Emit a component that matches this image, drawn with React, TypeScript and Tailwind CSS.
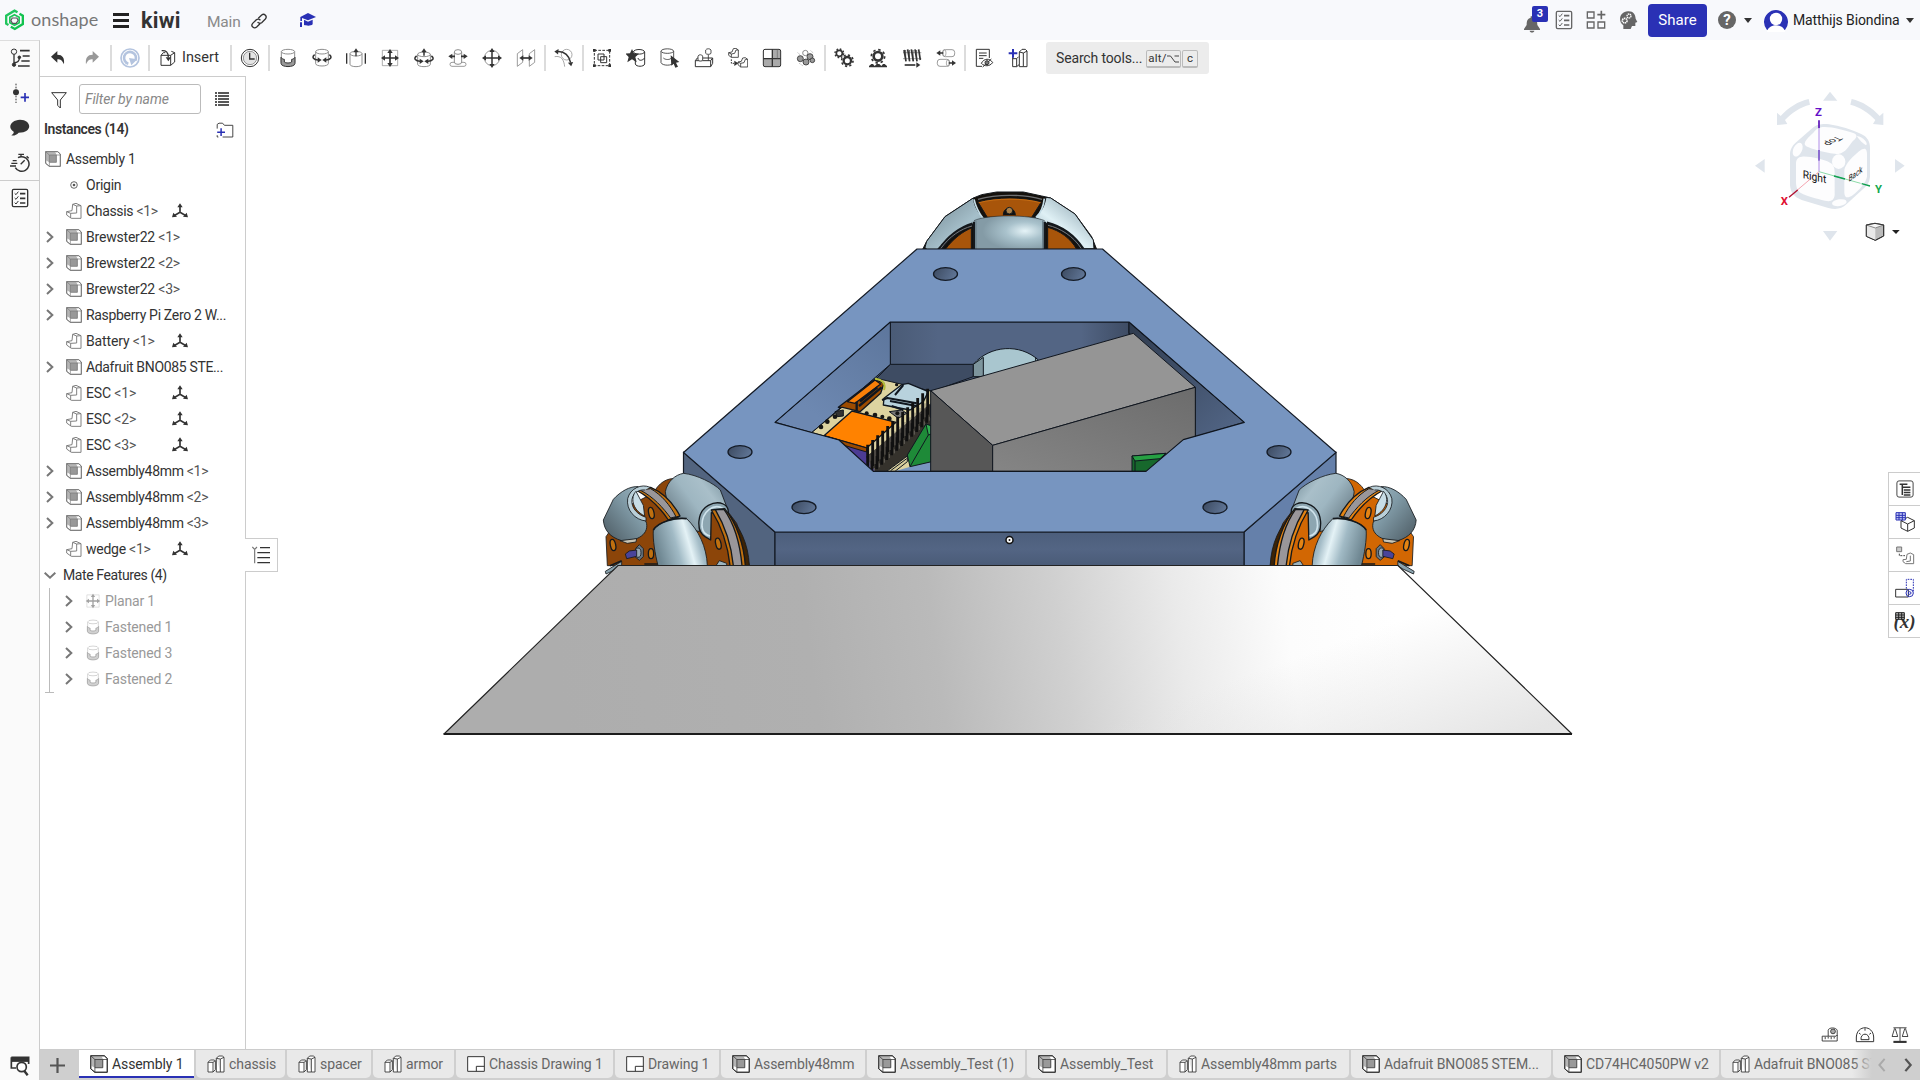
import React from "react";

type Kids = { children?: React.ReactNode };

function Ic({ children, className = "h-5 w-5", stroke = "#333" }: Kids & { className?: string; stroke?: string }) {
  return (
    <svg viewBox="0 0 60 60" className={`${className} shrink-0`} fill="none" stroke={stroke} strokeWidth="3">
      {children}
    </svg>
  );
}

/* ---------- tool bar icons ---------- */

const Cyl = ({ x = 15, y = 6, w = 30, h = 48 }: { x?: number; y?: number; w?: number; h?: number }) => (
  <g stroke="#777" strokeWidth="2.5">
    <path d={`M${x} ${y + 7}V${y + h - 7}a${w / 2} 7 0 0 0 ${w} 0V${y + 7}`} fill="#fff" />
    <ellipse cx={x + w / 2} cy={y + 7} rx={w / 2} ry="7" fill="#fff" />
  </g>
);

const Arrow = ({ a, x, y }: { a: number; x: number; y: number }) => (
  <path d="M0 -9L8 3H-8z" fill="#333" stroke="none" transform={`translate(${x} ${y}) rotate(${a})`} />
);

const icUndo = <Ic><path d="M9 26L28 9V20C44 20 50 30 48 49C43 38 38 34 28 34V44z" fill="#333" stroke="none" /></Ic>;
const icRedo = <Ic><path d="M51 26L32 9V20C16 20 10 30 12 49C17 38 22 34 32 34V44z" fill="#999" stroke="none" /></Ic>;
const icUpdate = (
  <Ic stroke="#b4c4df">
    <circle cx="30" cy="30" r="27" strokeWidth="5" />
    <path d="M25 47A18 18 0 1 1 46 38" strokeWidth="8" />
    <path d="M27 30L52 34L34 52z" fill="#b4c4df" stroke="none" />
  </Ic>
);
const icInsert = (
  <Ic>
    <path d="M9 22H38V52H9zM38 52L50 42V14L40 10M38 22L50 14M9 22L16 14H22" strokeWidth="3" />
    <path d="M11 8C24 7 31 12 31 28" strokeWidth="4" />
    <Arrow a={180} x={31} y={31} />
  </Ic>
);
const icClock = (
  <Ic>
    <circle cx="30" cy="30" r="26" />
    <circle cx="30" cy="30" r="20" fill="#e4e4e4" strokeWidth="2" stroke="#666" />
    <path d="M29 14V33H44" strokeWidth="4" />
  </Ic>
);
const icFastened = (
  <Ic>
    <Cyl x={10} y={4} w={40} h={44} />
    <path d="M9 28V46C9 59 51 59 51 46V28C48 32 44 34 41 34V42C38 46 22 46 19 42V34C15 34 11 31 9 28z" fill="#999" stroke="#333" />
  </Ic>
);
const icRevolute = (
  <Ic>
    <Cyl x={11} y={4} w={38} h={50} />
    <path d="M8 20C-2 27 5 36 18 36M52 20C62 27 55 36 42 36" strokeWidth="4.5" />
    <Arrow a={90} x={20} y={36} /><Arrow a={-90} x={40} y={36} />
  </Ic>
);
const icSlider = (
  <Ic>
    <Cyl x={12} y={10} w={36} h={46} />
    <path d="M2 16V47M58 16V47M30 25V8" strokeWidth="4" />
    <Arrow a={0} x={30} y={10} />
  </Ic>
);
const icPlanar = (
  <Ic>
    <path d="M7 7H53V53H7z" stroke="#888" strokeWidth="2" />
    <path d="M30 12V48M12 30H48" strokeWidth="5" />
    <Arrow a={0} x={30} y={12} /><Arrow a={180} x={30} y={48} /><Arrow a={-90} x={12} y={30} /><Arrow a={90} x={48} y={30} />
  </Ic>
);
const icCylindrical = (
  <Ic>
    <Cyl x={11} y={12} w={38} h={44} />
    <path d="M8 24C-3 31 5 40 18 40M52 24C63 31 55 40 42 40M30 23V8" strokeWidth="4.5" />
    <Arrow a={90} x={20} y={40} /><Arrow a={-90} x={40} y={40} /><Arrow a={0} x={30} y={10} />
  </Ic>
);
const icPinSlot = (
  <Ic>
    <rect x="6" y="43" width="48" height="12" rx="6" stroke="#888" strokeWidth="2.5" />
    <Cyl x={19} y={5} w={22} h={44} />
    <path d="M10 25H21M39 25H50" strokeWidth="5" />
    <Arrow a={-90} x={10} y={25} /><Arrow a={90} x={50} y={25} />
  </Ic>
);
const icBall = (
  <Ic>
    <circle cx="30" cy="30" r="23" stroke="#888" strokeWidth="2.5" />
    <path d="M30 8V52M8 30H52" strokeWidth="4.5" />
    <Arrow a={0} x={30} y={9} /><Arrow a={180} x={30} y={51} /><Arrow a={-90} x={9} y={30} /><Arrow a={90} x={51} y={30} />
  </Ic>
);
const icParallel = (
  <Ic>
    <path d="M4 17L20 5V43L4 55zM56 5L40 17V55L56 43z" stroke="#888" strokeWidth="2.5" />
    <path d="M20 30H40" strokeWidth="5" />
    <Arrow a={-90} x={19} y={30} /><Arrow a={90} x={41} y={30} />
  </Ic>
);
const icTangent = (
  <Ic>
    <circle cx="38" cy="20" r="16" stroke="#999" strokeWidth="2.5" />
    <path d="M2 26C22 22 30 36 32 56" stroke="#999" strokeWidth="2.5" />
    <path d="M10 11C32 9 46 24 50 44" strokeWidth="4.5" />
    <Arrow a={-85} x={10} y={11} /><Arrow a={170} x={50} y={46} />
  </Ic>
);
const icGroup = (
  <Ic>
    <path d="M7 7H53V53H7z" strokeDasharray="8 4" />
    <path d="M18 18H36V36H18zM26 26H44V44H26z" />
    <path d="M3 3h8v8h-8zM49 3h8v8h-8zM3 49h8v8h-8zM49 49h8v8h-8z" fill="#333" stroke="none" />
  </Ic>
);
const icStarPart = (
  <Ic>
    <path d="M22 12C24 2 54 2 56 12V48C54 57 30 57 28 48V38M24 14C30 20 52 20 56 12M36 30C38 40 50 38 56 30" />
    <path d="M18 3L24 16L39 17L28 27L32 43L18 34L4 43L8 27L-2 17L12 16z" fill="#333" stroke="none" />
  </Ic>
);
const icSelectPart = (
  <Ic>
    <path d="M3 10C3 0 41 0 41 10V44C37 54 7 54 3 44zM3 10C7 18 37 18 41 10M10 30C16 36 30 36 34 30" strokeWidth="2.5" />
    <path d="M32 22L58 42L48 44L54 56L46 59L41 47L34 53z" fill="#333" stroke="none" />
  </Ic>
);
const icReplicate = (
  <Ic>
    <path d="M4 38L10 30H56V46L50 56H4zM4 38H50V56M50 38L56 30" />
    <path d="M12 24V36C14 40 24 40 26 36V24C24 19 14 19 12 24zM35 6V16C37 20 49 20 51 16V6C49 1 37 1 35 6zM43 20V38" strokeWidth="2.5" fill="#fff" />
  </Ic>
);
const icPattern = (
  <Ic>
    <path d="M2 14L12 12L16 2L24 1L31 6V28H10L2 22zM10 28V18L20 16L24 6L31 6M2 14L10 18" strokeWidth="2.5" />
    <path d="M30 42L40 40L44 30L52 29L59 34V57H38L30 50zM38 57V46L48 44L52 34L59 34M30 42L38 46" strokeWidth="2.5" />
    <path d="M10 34V46H18" strokeWidth="3" strokeDasharray="5 3" /><Arrow a={90} x={22} y={46} />
  </Ic>
);
const icGrid = (
  <Ic>
    <rect x="4" y="4" width="52" height="52" rx="5" fill="#aaa" />
    <path d="M6 6H30V32H6z" fill="#fff" stroke="none" />
    <path d="M31 4V56M4 32H56" strokeWidth="4" /><path d="M46 5V31" strokeWidth="2" stroke="#666" />
  </Ic>
);
const icBalls = (
  <Ic>
    <g fill="#999" strokeWidth="2.5"><circle cx="28" cy="15" r="8" fill="#fff" stroke="#777" /><circle cx="13" cy="32" r="9" /><circle cx="30" cy="42" r="9" /><circle cx="42" cy="26" r="9" /><circle cx="49" cy="37" r="7" /></g>
    <path d="M5 14L12 20M44 8L52 15M10 46L20 53" stroke="#aaa" strokeDasharray="3 2" />
  </Ic>
);
const icGears = (
  <Ic>
    <circle cx="16" cy="16" r="9" strokeWidth="5" /><circle cx="16" cy="16" r="13" strokeWidth="4" strokeDasharray="5 5.2" />
    <circle cx="40" cy="38" r="11" strokeWidth="7" /><circle cx="40" cy="38" r="17" strokeWidth="5" strokeDasharray="6.5 6.8" />
  </Ic>
);
const icRack = (
  <Ic>
    <circle cx="30" cy="25" r="13" strokeWidth="8" /><circle cx="30" cy="25" r="20" strokeWidth="5" strokeDasharray="7.5 8.2" />
    <path d="M3 58V54L10 48H15L20 54L26 48H34L40 54L45 48H50L57 54V58z" fill="#333" stroke="none" />
  </Ic>
);
const icScrew = (
  <Ic>
    <path d="M3 14H58M3 32H58" strokeWidth="2" stroke="#777" />
    <path d="M6 6L12 40M17 4L23 40M28 4L34 40M39 4L45 40M50 4L55 36" strokeWidth="5" />
    <path d="M11 6V38M22 6V38M33 6V38M44 6V38" strokeWidth="2.5" />
    <path d="M8 51H40" strokeWidth="5" /><Arrow a={90} x={46} y={51} />
  </Ic>
);
const icLinear = (
  <Ic>
    <rect x="20" y="5" width="36" height="21" rx="8" stroke="#888" strokeWidth="2.5" /><ellipse cx="25" cy="15" rx="5" ry="10" stroke="#888" strokeWidth="2" />
    <rect x="4" y="34" width="36" height="21" rx="8" stroke="#888" strokeWidth="2.5" /><ellipse cx="36" cy="45" rx="5" ry="10" stroke="#888" strokeWidth="2" />
    <path d="M10 15H22M38 45H50" strokeWidth="5" /><Arrow a={-90} x={10} y={15} /><Arrow a={90} x={51} y={45} />
  </Ic>
);
const icNote = (
  <Ic>
    <path d="M24 55H7V4H46V30M15 15H38M15 23H38M15 31H28" />
    <path d="M22 46C30 30 48 30 56 44C46 56 32 56 22 46zM26 57L52 33" strokeWidth="3" /><circle cx="39" cy="44" r="6" fill="#777" />
  </Ic>
);
const icPartStudio = (
  <Ic>
    <path d="M14 26V56H26V32L32 26M26 32H14M34 12L42 4H52L57 9V56H46L34 56zM46 56V15L34 12M46 15L57 9M26 56L33 50" />
    <path d="M2 16H28M15 3V29" stroke="#2a31b5" strokeWidth="6" />
  </Ic>
);

/* ---------- document icons ---------- */

function AsmIcon({ c = "h-4 w-4", line = "#777" }: { c?: string; line?: string }) {
  return (
    <svg viewBox="0 0 48 48" className={`${c} shrink-0`} fill="none" stroke={line} strokeWidth="2.600">
      <path d="M2 2H38L46 9V46H13L2 37z" fill="#fff" />
      <path d="M2 2H30L35 11V34H13L2 28z" fill="#b5b5b5" stroke="none" />
      <path d="M13 12H34V34H13z" fill="#999" stroke="none" />
      <path d="M2 2L13 12M13 34V46M34 12H46M13 12V34H34V12z" strokeWidth="2" />
      <path d="M2 2H38L46 9V46H13L2 37z" />
    </svg>
  );
}
function PartIcon() {
  return (
    <svg viewBox="0 0 48 48" className="h-4 w-4 shrink-0" fill="none" stroke="#777" strokeWidth="2.800">
      <path d="M2 26L18 23L20 4L30 1L45 8V46H16L2 36zM2 26L14 31V45M14 31L32 30V9L45 8M20 4L32 9" />
    </svg>
  );
}
function StudioIcon() {
  return (
    <svg viewBox="0 0 54 54" className="h-[18px] w-[18px] shrink-0" fill="none" stroke="#333" strokeWidth="2.6">
      <path d="M3 22L10 15H22L25 18V44L18 51H3zM3 22H18V51M18 22L25 17" fill="#fff" />
      <path d="M28 10L35 3H46L51 7V51H40L28 51zM40 51V12L28 10M40 12L51 7" fill="#fff" />
    </svg>
  );
}
function DrawingIcon() {
  return (
    <svg viewBox="0 0 54 54" className="h-[18px] w-[18px] shrink-0" fill="none" stroke="#333" strokeWidth="3">
      <path d="M2 5H52V49H2z" fill="#fff" /><path d="M28 49V34H52" />
    </svg>
  );
}
const Chev = ({ down = false }: { down?: boolean }) => (
  <svg viewBox="0 0 36 36" className="h-3 w-3 shrink-0" fill="none" stroke="#777" strokeWidth="6">
    {down ? <path d="M2 11L18 26L34 11" /> : <path d="M9 3L25 18L9 33" />}
  </svg>
);
const FixedIcon = () => (
  <svg viewBox="0 0 48 48" className="h-4 w-4 shrink-0" fill="none" stroke="#333" strokeWidth="5">
    <path d="M24 8V28L6 38M24 28L42 38" />
    <path d="M24 1L32 13H16zM0 43L4 29L15 41zM48 43L44 29L33 41z" fill="#333" stroke="none" />
  </svg>
);

function Tool({ children, w = "w-[34px]" }: Kids & { w?: string }) {
  return <div className={`flex h-full ${w} shrink-0 items-center justify-center`}>{children}</div>;
}
const Sep = () => <div className="mx-px h-[26px] w-[2px] shrink-0 bg-[#dcdcdc]" />;

const Caret = () => <svg viewBox="0 0 8 5" className="h-[5px] w-2 shrink-0"><path d="M0 0H8L4 5z" fill="#333" /></svg>;

const TaskIcon = ({ c = "#333" }: { c?: string }) => (
  <Ic stroke={c}>
    <rect x="7" y="4" width="46" height="52" rx="4" strokeWidth="4" />
    <path d="M14 16l4 4 7-9M14 30l4 4 7-9M14 44l4 4 7-9" strokeWidth="3" />
    <path d="M30 17H46M30 31H46M30 45H46" strokeWidth="5" />
  </Ic>
);

/* ---------- header ---------- */

function Header() {
  return (
    <header className="flex h-10 shrink-0 items-center bg-[#f8f9fc]">
      <svg viewBox="0 0 62 66" className="ml-1 h-[22px] w-[21px]" fill="none" strokeWidth="7">
        <path d="M13 48L6 44V20L31 5L40 10" stroke="#22c55e" />
        <path d="M46 14L56 20V45L32 60L20 53" stroke="#12c24f" />
        <path d="M31 17L45 25V41L31 49L17 41V25z" stroke="#1cc758" strokeWidth="5" />
        <path d="M24 27H38L42 34L36 43H25L20 35z" stroke="#555" strokeWidth="3.5" />
      </svg>
      <span className="ml-[6px] w-[68px] -translate-y-px whitespace-nowrap font-[Lato] text-[18px] leading-none tracking-[0.1px] text-[#777]">onshape</span>
      <div className="ml-[14px] flex w-4 flex-col gap-[3px]">
        <div className="h-[3px] bg-[#222]" /><div className="h-[3px] bg-[#222]" /><div className="h-[3px] bg-[#222]" />
      </div>
      <span className="ml-[12px] mt-[2px] w-[41px] whitespace-nowrap text-[21.5px] font-bold tracking-[0.25px] text-[#333]">kiwi</span>
      <span className="ml-[25px] mt-[6px] w-[33px] whitespace-nowrap text-[15.5px] tracking-[-0.2px] text-[#8a8a8a]">Main</span>
      <svg viewBox="0 0 48 48" className="ml-[11px] mt-[2px] h-4 w-4" fill="none" stroke="#333" strokeWidth="4">
        <path d="M22 16L32 6C40 0 50 10 43 18L32 29C28 32 22 31 20 27M27 32L17 42C9 49 -2 39 5 31L16 20C20 17 26 18 28 22" />
      </svg>
      <svg viewBox="0 0 48 42" className="ml-[33px] h-[14px] w-4" fill="#2a31b5">
        <path d="M24 0L48 12L24 22L6 15V24H1V12zM12 20L24 26L38 20V34C32 40 18 38 12 36zM0 28H6V42H0z" />
      </svg>
      <div className="flex-1" />
      <div className="relative mr-[6px] flex h-6 w-[24px] items-center">
        <svg viewBox="0 0 48 54" className="mt-2 h-[18px] w-4" fill="#666"><path d="M20 4H28V8C38 11 40 18 40 30L48 42V45H0V42L8 30C8 18 10 11 20 8zM17 47H31C31 54 17 54 17 47z" /></svg>
        <div className="absolute -top-[2px] left-2 flex h-4 w-4 items-center justify-center rounded-[2px] bg-[#2a31b5] text-[11px] font-bold text-white">3</div>
      </div>
      <TaskIcon c="#666" />
      <Ic className="ml-3 h-5 w-5" stroke="#666">
        <path d="M4 6H24V24H4zM4 36H24V54H4zM36 36H56V54H36z" strokeWidth="4" /><path d="M34 14H58M46 2V28" strokeWidth="5" />
      </Ic>
      <Ic className="ml-3 h-5 w-5" stroke="none">
        <path d="M30 4C46 3 52 14 53 26L58 36L52 38V48H42L38 57H16V46C-2 32 6 5 30 4z" fill="#666" />
        <circle cx="33" cy="18" r="6" stroke="#fff" strokeWidth="4" strokeDasharray="4 1.5" fill="#666" /><circle cx="20" cy="32" r="7" stroke="#fff" strokeWidth="5" strokeDasharray="4 1.5" fill="#666" />
      </Ic>
      <button className="ml-[10px] h-[33px] w-[59px] rounded-[4px] bg-[#2a31b5] text-[15px] tracking-[0.1px] text-white">Share</button>
      <div className="ml-[11px] flex h-[18px] w-[18px] items-center justify-center rounded-full bg-[#666] text-[15px] font-bold leading-none text-white">?</div>
      <div className="ml-2"><Caret /></div>
      <svg viewBox="0 0 24 24" className="ml-3 h-6 w-6 shrink-0">
        <path d="M3 22A12 12 0 1 1 21 22z" fill="#2a31b5" />
        <circle cx="12" cy="11" r="6.200" fill="#fff" /><path d="M3 24C4 15 20 15 21 24z" fill="#fff" />
      </svg>
      <span className="ml-[5px] w-[107px] whitespace-nowrap text-[14px] tracking-[-0.12px] text-[#222]">Matthijs Biondina</span>
      <div className="ml-[6px] mr-[6px]"><Caret /></div>
    </header>
  );
}

function Toolbar() {
  return (
    <div className="flex h-9 shrink-0 items-center pl-0">
      <Tool w="w-[35px]">{icUndo}</Tool><Tool>{icRedo}</Tool><Sep /><Tool>{icUpdate}</Tool><Sep />
      <div className="flex w-[78px] items-center pl-[7px]">
        {icInsert}<span className="ml-[4px] text-[14.5px] tracking-[-0.05px]">Insert</span>
      </div>
      <Sep /><Tool>{icClock}</Tool><Sep />
      <Tool>{icFastened}</Tool><Tool>{icRevolute}</Tool><Tool>{icSlider}</Tool><Tool>{icPlanar}</Tool><Tool>{icCylindrical}</Tool>
      <Tool>{icPinSlot}</Tool><Tool>{icBall}</Tool><Tool>{icParallel}</Tool><Sep /><Tool>{icTangent}</Tool><Sep />
      <Tool>{icGroup}</Tool><Tool>{icStarPart}</Tool><Tool>{icSelectPart}</Tool><Tool>{icReplicate}</Tool><Tool>{icPattern}</Tool>
      <Tool>{icGrid}</Tool><Tool>{icBalls}</Tool><Sep />
      <Tool>{icGears}</Tool><Tool>{icRack}</Tool><Tool>{icScrew}</Tool><Tool>{icLinear}</Tool><Sep />
      <Tool>{icNote}</Tool><Tool>{icPartStudio}</Tool>
      <div className="ml-[11px] flex h-8 w-[163px] items-center rounded-[3px] bg-[#ececec] pl-[10px]">
        <span className="w-[90px] whitespace-nowrap text-[14px] tracking-[-0.15px]">Search tools...</span>
        <span className="mt-[2px] flex h-[18px] w-[35px] items-center justify-center rounded-[2px] border border-b-2 border-[#bbb] text-[11.5px] tracking-[0.2px]">
          alt/
          <svg viewBox="0 0 12 8" className="h-2 w-3" fill="none" stroke="#444"><path d="M0 1H3.500L8 7H12M7.500 1H12" /></svg>
        </span>
        <span className="ml-px mt-[2px] flex h-[18px] w-4 items-center justify-center rounded-[2px] border border-b-2 border-[#bbb] text-[11.5px]">c</span>
      </div>
    </div>
  );
}

/* ---------- left side ---------- */

function Rail() {
  return (
    <aside className="flex w-10 shrink-0 flex-col items-center border-r border-t border-[#ccc] border-t-[#ddd] bg-[#fafafa]">
      <div className="mt-[7px]">
        <Ic><circle cx="12" cy="11" r="8" /><path d="M12 19V50M12 44C26 44 28 38 28 30" strokeWidth="4" /><circle cx="12" cy="50" r="5" fill="#333" /><circle cx="28" cy="28" r="4" fill="#333" /><path d="M30 8H59M38 24H59M34 39H59M24 54H59" strokeWidth="5" /></Ic>
      </div>
      <div className="mt-[15px]">
        <Ic><path d="M18 2V60" strokeDasharray="5 4" /><circle cx="18" cy="28" r="9" fill="#333" stroke="none" /><path d="M32 43H57M45 30V56" stroke="#2a31b5" strokeWidth="5" /></Ic>
      </div>
      <div className="mt-[15px]">
        <Ic><path d="M30 5C65 5 70 44 26 44C20 50 12 54 4 52C10 48 12 44 11 41C-10 30 4 5 30 5z" fill="#333" stroke="none" /></Ic>
      </div>
      <div className="mt-[15px]">
        <Ic><path d="M24 14A22 22 0 1 1 16 44" strokeWidth="4.500" /><path d="M25 4H42M33 4V12M50 10L56 16M32 34L44 22M8 23H20M4 31H22M0 39H18" strokeWidth="4" /></Ic>
      </div>
      <div className="mt-[7px] w-full border-t border-[#ccc]" />
      <div className="mt-[7px]"><TaskIcon /></div>
      <div className="flex-1" />
      <div className="mb-1">
        <Ic><path d="M4 4H56V24M4 4V36H18M4 12H56" strokeWidth="5" /><path d="M6 6H54V16H6z" fill="#333" /><circle cx="35" cy="33" r="14" fill="#fff" strokeWidth="5" /><path d="M43 45L53 58" strokeWidth="7" /></Ic>
      </div>
    </aside>
  );
}

type Item = { n: string; i?: string; k: "asm" | "part"; t: string };
const items: Item[] = [
  { n: "Chassis", i: "<1>", k: "part", t: "tracking-[-0.33px]" },
  { n: "Brewster22", i: "<1>", k: "asm", t: "tracking-[-0.2px]" },
  { n: "Brewster22", i: "<2>", k: "asm", t: "tracking-[-0.2px]" },
  { n: "Brewster22", i: "<3>", k: "asm", t: "tracking-[-0.2px]" },
  { n: "Raspberry Pi Zero 2 W...", k: "asm", t: "tracking-[-0.32px]" },
  { n: "Battery", i: "<1>", k: "part", t: "tracking-[-0.15px]" },
  { n: "Adafruit BNO085 STE...", k: "asm", t: "tracking-[-0.34px]" },
  { n: "ESC", i: "<1>", k: "part", t: "tracking-[-0.15px]" },
  { n: "ESC", i: "<2>", k: "part", t: "tracking-[-0.15px]" },
  { n: "ESC", i: "<3>", k: "part", t: "tracking-[-0.15px]" },
  { n: "Assembly48mm", i: "<1>", k: "asm", t: "tracking-[-0.32px]" },
  { n: "Assembly48mm", i: "<2>", k: "asm", t: "tracking-[-0.32px]" },
  { n: "Assembly48mm", i: "<3>", k: "asm", t: "tracking-[-0.32px]" },
  { n: "wedge", i: "<1>", k: "part", t: "tracking-[-0.25px]" },
];

function Tree() {
  return (
    <div className="flex w-[206px] shrink-0 flex-col border-r border-t border-[#ccc] bg-white text-[14px]">
      <div className="mt-[7px] flex h-[30px] items-center">
        <Ic className="ml-[9px] mt-px h-5 w-5"><path d="M8 8H52L34 30V54L26 46V30z" /></Ic>
        <div className="ml-[10px] flex h-[30px] w-[122px] items-center rounded-[3px] border border-[#bbb] pl-[5px] italic tracking-[-0.1px] text-[#888]">Filter by name</div>
        <svg viewBox="0 0 14 14" className="ml-[14px] h-[14px] w-[14px]" stroke="#222" strokeWidth="1.500"><path d="M0 1H2M3 1H14M0 4H2M3 4H14M0 7H2M3 7H14M0 10H2M3 10H14M0 13H2M3 13H14" /></svg>
      </div>
      <div className="flex h-[30px] items-center justify-between pl-1 pr-[11px]">
        <span className="text-[14px] font-semibold tracking-[-0.42px]">Instances (14)</span>
        <Ic className="mt-1 h-[18px] w-[18px]"><path d="M4 22V8L10 4H22L28 11H56V50H22M4 44V50H8" /><path d="M4 34H30M17 21V47" stroke="#2a31b5" strokeWidth="5" /></Ic>
      </div>
      <div className="mt-[2px] flex h-[26px] items-center gap-[5px] pl-[5px]"><AsmIcon /><span className="tracking-[-0.3px]">Assembly 1</span></div>
      <div className="flex h-[26px] items-center pl-[30px]">
        <svg viewBox="0 0 8 8" className="h-2 w-2"><circle cx="4" cy="4" r="3.300" fill="none" stroke="#555" strokeWidth=".9" /><circle cx="4" cy="4" r="1.300" fill="#555" /></svg>
        <span className="ml-2 tracking-[-0.25px]">Origin</span>
      </div>
      {items.map((it, i) => (
        <div key={i} className="flex h-[26px] items-center whitespace-nowrap pl-1">
          <div className="w-[22px]">{it.k === "asm" && <Chev />}</div>
          {it.k === "asm" ? <AsmIcon /> : <PartIcon />}
          <span className={`ml-1 w-[86px] ${it.t}`}>{it.n}{it.i && <span className="text-[#555]"> {it.i}</span>}</span>
          {it.k === "part" && <FixedIcon />}
        </div>
      ))}
      <div className="flex h-[26px] items-center pl-1"><Chev down /><span className="ml-[7px] tracking-[-0.4px]">Mate Features (4)</span></div>
      <div className="ml-[9px] w-[140px] border-l border-[#bbb] text-[#999]">
        {["Planar 1", "Fastened 1", "Fastened 3", "Fastened 2"].map((n, i) => (
          <div key={n} className="flex h-[26px] items-center whitespace-nowrap pl-[13px]">
            <Chev />
            <div className="ml-[10px] flex opacity-45 [&_svg]:h-4 [&_svg]:w-4">{i ? icFastened : icPlanar}</div>
            <span className="ml-[4px] tracking-[-0.15px]">{n}</span>
          </div>
        ))}
      </div>
      <div className="ml-[5px] w-[9px] border-t border-[#bbb]" />
    </div>
  );
}

/* ---------- 3D view ---------- */

function Wheel({ transform, plate, edge }: { transform: string; plate: string; edge: string }) {
  return (
    <g transform={transform} stroke="#14181c" strokeWidth="2.500" strokeLinejoin="round">
      <path d="M190 160C205 130 230 112 262 116L380 170L440 250L470 340L478 377H52L48 290L110 200z" fill={plate} />
      <path d="M410 215C450 260 475 310 478 377H462C458 310 440 250 410 215z" fill="#3d2305" />
      <path d="M281 100C320 104 372 130 391 150L410 200C360 185 325 220 328 275C270 260 228 190 226 155C232 125 255 104 281 100z" fill="url(#roller)" />
      <path d="M412 230C425 190 385 180 355 196C320 216 318 272 345 290L362 300L364 218z" fill="#8da6b1" strokeWidth="4" />
      <path d="M400 206C372 188 334 214 336 260C338 280 350 286 360 288" fill="none" stroke="#cfe3ec" strokeWidth="5" />
      <path d="M364 210L404 206C440 250 462 315 466 377H420C414 320 395 260 364 210z" fill={edge} strokeWidth="4" />
      <path d="M376 209L402 208C432 250 450 310 456 377H430C424 315 405 258 376 209z" fill="#99969a" strokeWidth="4" />
      <path d="M138 150L182 142C220 158 250 190 270 228L235 240C215 210 185 175 138 150z" fill={edge} strokeWidth="4" />
      <path d="M150 150L182 146C215 165 240 195 258 230L242 234C220 204 190 170 150 150z" fill="#99969a" strokeWidth="3" />
      <path d="M70 178C92 154 120 138 145 140C115 155 108 215 168 244C180 280 145 305 95 302C60 292 42 270 40 240z" fill="url(#rollerDark)" />
      <path d="M180 142C155 130 120 145 113 176C108 210 135 240 168 243V232C145 225 122 205 126 178C130 156 150 148 165 150" fill="#b9cfd8" />
      <path d="M138 154C122 170 124 208 164 228L160 196z" fill="#c8dde6" />
      <path d="M190 270C205 245 255 232 290 236C325 270 350 320 352 377H204C195 340 188 300 190 270z" fill="url(#roller2)" />
      <path d="M190 270C205 245 255 232 290 236" fill="none" strokeWidth="5" />
      <g fill={edge} strokeWidth="4">
        <ellipse cx="184" cy="219" rx="8" ry="17" transform="rotate(-12 184 219)" />
        <ellipse cx="385" cy="311" rx="8" ry="17" transform="rotate(-12 385 311)" />
        <ellipse cx="69" cy="315" rx="8" ry="17" transform="rotate(-12 69 315)" />
        <ellipse cx="183" cy="341" rx="8" ry="15" />
      </g>
      <path d="M137 325L148 314L160 326V350L148 361L135 350z" fill="#687784" />
      <ellipse cx="144" cy="338" rx="9" ry="14" fill="#98a8b3" />
      <path d="M140 330L118 333L106 342L110 356L140 349z" fill="#49449a" />
      <path d="M90 302L140 296L138 306L112 310z" fill="#c9c5b5" />
      <path d="M46 394L95 364V377L82 386L48 402z" fill="#8aa3ae" />
      <path d="M378 377L388 362L410 370V377z" fill="#9db4be" />
      <path d="M60 377L95 362M163 372H203" strokeWidth="5" />
    </g>
  );
}

const pins = Array.from({ length: 13 }, (_, i) => ({ x: 323 + i * 15.0, y: 434 - i * 14 }));

function Pocket() {
  return (
    <g transform="translate(760 300) scale(.333333)" stroke="#10161f" strokeWidth="3" strokeLinejoin="round">
      <clipPath id="pocketClip"><path d="M391 66H1107L1453 367L1270 419L1158 514H340L237 420L45 367z" /></clipPath>
      <g clipPath="url(#pocketClip)">
        <path d="M45 66H1453V514H45z" fill="#43536d" />
        <path d="M391 66H1107V250H391z" fill="url(#backWall)" />
        <path d="M391 193H645L640 230L500 280H391L350 235z" fill="#3e4c63" />
        <path d="M391 66V193L155 398L45 367z" fill="url(#leftWall)" />
        <path d="M1107 66L1453 367L1306 410V262L1107 100z" fill="url(#rightWall)" />
        <path d="M640 230V193C690 135 780 130 835 180V240z" fill="#a9c6cf" />
        <path d="M640 230V193L670 172V230z" fill="#7d959d" /><path d="M827 172V190" />
        {/* controller board */}
        <path d="M350 235L520 275V514H340L237 420L155 398z" fill="#ddd3a0" />
        <path d="M237 420L320 450L350 514H330z" fill="#4c3c93" />
        <path d="M235 322L345 238L372 250L362 280L300 335L248 322z" fill="#9c4b00" strokeWidth="4" />
        <path d="M262 305L345 240L362 252L285 310z" fill="#f87f08" strokeWidth="4" />
        <path d="M297 318L365 262M300 305L352 262M290 335V305" strokeWidth="7" />
        <path d="M345 236C368 238 378 252 372 270" fill="none" stroke="#b5bd3a" strokeWidth="6" />
        <path d="M425 254L445 250L505 275L490 305L450 330L370 315L372 295z" fill="#b8d2dd" strokeWidth="4" />
        <path d="M366 300L382 294L470 310M390 303L470 318M395 318L430 330M430 255L405 285" strokeWidth="6" fill="none" />
        <path d="M388 335L425 330L440 340L415 355z" fill="#777" />
        <path d="M192 407L276 333L408 367L320 444z" fill="#ff8200" strokeWidth="4" />
        <path d="M192 407L320 444V456L215 425z" fill="#9a4a00" />
        <path d="M225 335L250 330V348L232 350z" fill="#333" />
        <g fill="#151515" stroke="none"><circle cx="183" cy="381" r="7" /><circle cx="202" cy="365" r="7" /><circle cx="225" cy="350" r="7" /><circle cx="320" cy="340" r="6" /><circle cx="345" cy="345" r="7" /><circle cx="367" cy="350" r="6" /><circle cx="388" cy="356" r="7" /><circle cx="412" cy="340" r="6" /><circle cx="410" cy="254" r="5" /></g>
        <path d="M318 470L350 445L512 310V380L440 470L380 514H345z" fill="#35322c" stroke="none" />
        <path d="M380 514L442 468V485L405 514z" fill="#d6cc9b" />
        <path d="M392 512L440 476" />
        {pins.map((p) => (
          <path key={p.x} d={`M${p.x} ${p.y}v78M${p.x + 12} ${p.y + 48}v40`} stroke="#101010" strokeWidth="8.500" />
        ))}
        {pins.slice(0, 12).map((p) => (
          <path key={p.x} d={`M${p.x + 7} ${p.y + 30}v42M${p.x + 20} ${p.y + 70}v12`} stroke="#6d6a64" strokeWidth="2.500" />
        ))}
        <path d="M405 514L520 480V514z" fill="#7896c0" stroke="none" />
        <path d="M498 372L515 378V485L450 500L442 465z" fill="#1e8a38" /><path d="M505 405L450 500" /><path d="M498 372L515 378V402L505 405z" fill="#31ad50" />
        {/* battery block */}
        <path d="M512 272L1120 100L1306 262L698 436z" fill="#959595" />
        <path d="M512 272L698 436V514H512z" fill="#575757" />
        <path d="M698 436L1306 262V514H698z" fill="url(#battery)" />
        <path d="M1116 468L1218 460L1180 514H1116z" fill="#17682c" /><path d="M1116 468L1218 460L1200 476L1125 483z" fill="#26a043" /><path d="M1125 483V514" />
      </g>
      <path d="M391 66H1107L1453 367L1270 419L1158 514H340L237 420L45 367z" fill="none" strokeWidth="3.500" />
    </g>
  );
}

function TopWheel() {
  return (
    <g transform="translate(900 170) scale(.333333)" stroke="#14181c" strokeWidth="3">
      <path d="M68 238L80 214L135 140L220 84L245 74L290 66H370L425 78L452 84L525 132L575 200L590 238z" fill="#15110c" />
      <path d="M234 96C290 80 370 80 424 96L395 142H262z" fill="#a8550a" />
      <path d="M234 88C290 72 370 72 426 88" fill="none" stroke="#6f7072" strokeWidth="4" />
      <path d="M236 98C290 84 370 84 422 98" fill="none" stroke="#d87a18" strokeWidth="2" />
      <path d="M75 232L80 214L135 140L220 84C224 115 238 132 254 145L218 162C170 180 140 210 112 238H80z" fill="url(#topRollerL)" />
      <path d="M438 82L452 84L525 132L580 210L582 236H548C520 195 480 170 440 160L404 142C426 125 434 105 438 82z" fill="url(#topRollerR)" />
      <path d="M222 88C228 115 240 133 250 146M433 86C430 112 420 132 408 142" stroke="#c4dce6" strokeWidth="5" fill="none" />
      <path d="M136 238C160 205 190 184 214 174V238zM443 172C480 182 512 205 530 238H443z" fill="#a8550a" />
      <path d="M120 238C150 195 180 175 218 163M548 238C520 195 480 170 440 160" fill="none" strokeWidth="12" />
      <path d="M122 236C150 198 180 178 216 168M544 236C520 198 480 174 444 166" fill="none" stroke="#77797b" strokeWidth="3" />
      <path d="M222 152C260 133 390 133 434 152V238H222z" fill="url(#topRollerM)" stroke="none" />
      <path d="M222 152C260 133 390 133 434 152" fill="none" strokeWidth="1.500" />
      <path d="M222 155V238M434 155V238" strokeWidth="7" /><path d="M228 152V238M428 152V238" stroke="#6f8590" strokeWidth="4" />
      <path d="M310 136C308 108 346 108 346 136" fill="#111" /><circle cx="328" cy="122" r="10" fill="#a7814d" />
    </g>
  );
}

function ViewCube() {
  return (
    <g transform="translate(1500 0) scale(.333333)" fontFamily="Roboto, sans-serif">
      <g fill="#dfe5ec">
        <path d="M990 275L1012 302H969zM990 722L1012 693H969zM765 497L794 477V518zM1214 497L1185 477V518z" />
        <path d="M926 297L930 314C900 322 875 338 855 360L862 372L831 375V338L842 348C865 322 895 304 926 297z" />
        <path d="M1055 297L1051 314C1081 322 1106 338 1126 360L1119 372L1150 375V338L1139 348C1116 322 1086 304 1055 297z" />
        <path d="M970 372C1000 370 1070 392 1094 408C1106 418 1110 430 1110 445V530C1108 548 1102 556 1090 566L1040 612C1025 626 1010 630 985 624L905 600C880 590 872 576 870 556V460C872 444 880 434 892 424L935 386C945 377 955 373 970 372z" />
      </g>
      <g fill="#fdfdfe">
        <path d="M974 381C1000 381 1040 392 1062 400C1076 406 1068 416 1058 424C1045 440 1038 458 1015 462C990 462 935 448 918 438C905 428 928 410 940 398C950 386 958 381 974 381z" />
        <path d="M906 470C930 468 975 480 990 488C1002 494 1004 505 1004 520V585C1002 602 992 606 975 602C950 597 918 588 904 580C892 572 888 562 888 545V490C888 478 894 471 906 470z" />
        <path d="M1086 448C1098 442 1101 450 1101 465V530C1098 548 1078 570 1058 586C1042 596 1034 594 1033 578V510C1036 492 1060 466 1086 448z" />
        <ellipse cx="1016" cy="485" rx="20" ry="22" /><ellipse cx="893" cy="449" rx="13" ry="22" transform="rotate(25 893 449)" /><ellipse cx="1018" cy="608" rx="22" ry="10" transform="rotate(-8 1018 608)" /><path d="M1070 408C1090 410 1106 430 1098 436C1088 430 1078 420 1070 408z" />
      </g>
      <path d="M957 361V385" stroke="#5a10b8" strokeWidth="5" /><path d="M957 385V452M957 482V515" stroke="#c3a9ee" strokeWidth="4" /><path d="M957 450V482" stroke="#7a54cb" strokeWidth="5" />
      <path d="M957 515L1082 550" stroke="#8cdba8" strokeWidth="3" /><path d="M1002 528L1035 537M1085 551L1110 558" stroke="#10a050" strokeWidth="4" />
      <path d="M957 515L890 572" stroke="#f4a4b0" strokeWidth="3" /><path d="M893 570L867 592" stroke="#b01030" strokeWidth="4" />
      <g fontWeight="700" fontSize="34"><text x="945" y="348" fill="#6510c8">Z</text><text x="842" y="616" fill="#e00f30">X</text><text x="1125" y="578" fill="#12a84e">Y</text></g>
      <g fill="#111" fontSize="28">
        <text transform="matrix(1.1 .24 0 1.200 908 534)">Right</text>
        <text transform="matrix(.72 -.530 0 1.050 1046 546)" fontSize="26">Back</text>
        <text transform="matrix(-.85 .500 -1 -.45 1010 407)" fontSize="28">Top</text>
      </g>
      <g stroke="#333" strokeWidth="3" strokeLinejoin="round"><path d="M1125 670L1151 675V708L1126 721L1099 709V675z" fill="#bbb" /><path d="M1099 675L1126 684V721L1099 709z" fill="#e8e8e8" stroke="none" /><path d="M1125 670L1151 675L1126 684L1099 675z" fill="#f5f5f5" stroke="#888" /><path d="M1125 670L1151 675V708L1126 721L1099 709V675z" fill="none" /></g>
      <path d="M1176 690H1199L1188 702z" fill="#222" />
    </g>
  );
}

const holes = [[945.5, 274], [1073.5, 274], [740, 452], [1279, 452], [804, 507.3], [1215, 507.3]];

function Model() {
  return (
    <svg viewBox="246 76 1674 974" className="block h-[974px] w-[1674px]" role="img" aria-label="Assembly view">
      <defs>
        <linearGradient id="wedge" gradientUnits="userSpaceOnUse" x1="560" y1="680" x2="1390" y2="570">
          <stop offset="0" stopColor="#adadad" /><stop offset=".3" stopColor="#b0b0b0" /><stop offset=".45" stopColor="#bababa" /><stop offset=".6" stopColor="#d0d0d0" /><stop offset=".74" stopColor="#eaeaea" /><stop offset=".87" stopColor="#fcfcfc" /><stop offset="1" stopColor="#ffffff" />
        </linearGradient>
        <linearGradient id="wedgeShade" gradientUnits="userSpaceOnUse" x1="1400" y1="620" x2="1450" y2="760">
          <stop offset="0" stopColor="#e2e2e2" stopOpacity="0" /><stop offset="1" stopColor="#e2e2e2" stopOpacity=".9" />
        </linearGradient>
        <linearGradient id="roller" x1="0" y1=".8" x2="1" y2=".1"><stop offset="0" stopColor="#62747e" /><stop offset=".45" stopColor="#9eb6c1" /><stop offset=".7" stopColor="#a9bfc9" /><stop offset="1" stopColor="#77909c" /></linearGradient>
        <linearGradient id="rollerDark" x1="0" y1="1" x2="1" y2="0"><stop offset="0" stopColor="#4b5961" /><stop offset=".6" stopColor="#809aa6" /><stop offset="1" stopColor="#9bb4bf" /></linearGradient>
        <linearGradient id="roller2" x1="0" y1=".35" x2="1" y2=".1"><stop offset="0" stopColor="#6f8792" /><stop offset=".35" stopColor="#a1bac5" /><stop offset=".58" stopColor="#e4f2f6" /><stop offset=".75" stopColor="#a5bdc8" /><stop offset="1" stopColor="#73909e" /></linearGradient>
        <linearGradient id="topRollerL" x1="0" y1="0" x2="1" y2="1"><stop offset="0" stopColor="#71848e" /><stop offset=".6" stopColor="#a5bfca" /><stop offset="1" stopColor="#7c949f" /></linearGradient>
        <linearGradient id="topRollerR" x1=".8" y1="0" x2="0" y2=".9"><stop offset="0" stopColor="#8ca4af" /><stop offset=".55" stopColor="#dff0f5" /><stop offset="1" stopColor="#93aeba" /></linearGradient>
        <radialGradient id="topRollerM" cx=".72" cy=".45" r=".6"><stop offset="0" stopColor="#e5f3f7" /><stop offset=".45" stopColor="#a9c2cc" /><stop offset="1" stopColor="#849ba6" /></radialGradient>
        <linearGradient id="backWall" x1="0" y1="0" x2="1" y2="0"><stop offset="0" stopColor="#4a5b76" /><stop offset=".2" stopColor="#536584" /><stop offset=".8" stopColor="#536584" /><stop offset="1" stopColor="#3e4c64" /></linearGradient>
        <linearGradient id="leftWall" x1="1" y1="0" x2=".3" y2=".8"><stop offset="0" stopColor="#5d769c" /><stop offset="1" stopColor="#6d88b1" /></linearGradient>
        <linearGradient id="rightWall" x1="0" y1="0" x2="1" y2="1"><stop offset="0" stopColor="#2f3b4e" /><stop offset="1" stopColor="#546889" /></linearGradient>
        <linearGradient id="battery" x1="0" y1="1" x2="1" y2="0"><stop offset="0" stopColor="#858585" /><stop offset="1" stopColor="#6c6c6c" /></linearGradient>
        <linearGradient id="front" x1="0" y1="0" x2="0" y2="1"><stop offset="0" stopColor="#4c5e7b" /><stop offset=".5" stopColor="#536584" /><stop offset="1" stopColor="#4a5b77" /></linearGradient>
        <linearGradient id="holeFill" x1="0" y1="0" x2="1" y2=".3"><stop offset="0" stopColor="#3b495f" /><stop offset="1" stopColor="#5e7393" /></linearGradient>
      </defs>
      <TopWheel />
      <g stroke="#151b25" strokeWidth="1.200" strokeLinejoin="round">
        <path d="M683.500 452L775 532V566H700L683.500 500z" fill="#52647f" />
        <path d="M1336 452L1244 532V566H1320L1336 500z" fill="#6580aa" />
        <path d="M775 532H1244V566H775z" fill="url(#front)" />
        <path d="M917 249H1102.500L1336 452.500L1244 532H775L683.500 452.500z" fill="#7795c0" />
      </g>
      {holes.map(([x, y]) => (
        <ellipse key={`${x}-${y}`} cx={x} cy={y} rx="12" ry="6.300" fill="url(#holeFill)" stroke="#141b26" strokeWidth="1.300" />
      ))}
      <Pocket />
      <Wheel transform="translate(590 440) scale(.333333)" plate="#8c4509" edge="#c0700f" />
      <Wheel transform="translate(1429.500 440) scale(-.333333 .333333)" plate="#d26703" edge="#e58413" />
      <path d="M618 566H1398L1572 734H444z" fill="url(#wedge)" />
      <path d="M1100 566H1398L1572 734H1100z" fill="url(#wedgeShade)" />
      <path d="M444 734L618 565.500H1398L1572 734" fill="none" stroke="#222" strokeWidth="1.200" />
      <path d="M443.500 734H1572" stroke="#1c1c1c" strokeWidth="2.200" />
      <circle cx="1009.500" cy="540" r="3.500" fill="#fff" stroke="#111" strokeWidth="1.500" /><circle cx="1009.500" cy="540" r="1" fill="#111" />
      <ViewCube />
    </svg>
  );
}

function SidePanel() {
  const cell = "flex h-[33px] items-center justify-center border-b border-[#ccc]";
  return (
    <div className="absolute right-0 top-[396px] w-8 border-l border-t border-[#ccc] bg-white">
      <div className={cell}><Ic className="h-[18px] w-[18px]"><rect x="3" y="3" width="54" height="54" rx="7" /><path d="M12 14H38M20 24H48M26 33H48M26 42H48M26 50H48M21 16V50" strokeWidth="5" /></Ic></div>
      <div className={cell}><Ic><path d="M18 26L38 16L58 26V48L38 58L18 48zM18 26L38 36L58 26M38 36V58" /><path d="M3 2H31V24H3z" fill="#c7cdf5" stroke="#2a31b5" /><path d="M12 2V24M22 2V24M3 10H31M3 17H31" stroke="#2a31b5" /></Ic></div>
      <div className={cell}><Ic stroke="#777"><path d="M5 6H20V20H5z" fill="#ccc" /><path d="M13 26V32H30" strokeDasharray="6 3" stroke="#444" /><path d="M24 44L34 43L36 28L46 24L56 29V56H32L24 50zM34 50L46 48V32" /></Ic></div>
      <div className={cell}><Ic><path d="M2 34H40V57H2z" /><path d="M34 32V4H55V40" stroke="#2a31b5" strokeDasharray="5 3" /><circle cx="44" cy="45" r="11" stroke="#2a31b5" /><circle cx="44" cy="45" r="4" stroke="#2a31b5" /></Ic></div>
      <div className={`${cell} relative font-serif text-[19px] font-bold italic`}>
        <span className="mt-[2px] font-['Liberation_Serif']">(x)</span>
        <svg viewBox="0 0 30 24" className="absolute left-[6px] top-[7px] h-2 w-[10px]" fill="#bbb" stroke="#222" strokeWidth="3"><path d="M2 2H28V22H2zM11 2V22M20 2V22M2 9H28M2 16H28" /></svg>
      </div>
    </div>
  );
}

function Viewport() {
  return (
    <main className="relative min-w-0 flex-1 bg-white">
      <Model />
      <div className="absolute -left-px top-[462px] flex h-[34px] w-[33px] items-center justify-center border border-l-0 border-[#ccc] bg-white">
        <svg viewBox="0 0 54 54" className="h-[18px] w-[18px]" fill="none" stroke="#333" strokeWidth="3.500"><path d="M1 3L8 10L15 3M8 12V52" stroke="#777" /><path d="M24 5H54M16 20H54M16 35H54M16 50H54" /></svg>
      </div>
      <SidePanel />
      <div className="absolute bottom-1 right-[11px] flex items-center gap-[16px]">
        <Ic className="h-[18px] w-[18px]"><path d="M4 34H50L54 30V50H4zM24 34V14C26 4 50 4 54 14V32M14 36V44M24 36V42M34 36V44M44 36V42" /><circle cx="40" cy="18" r="8" fill="#aaa" /></Ic>
        <Ic><path d="M4 50V36C6 -1 54 -1 56 36V50zM18 44C16 22 44 22 42 44zM12 24L17 28M48 24L43 28M30 10V17" /></Ic>
        <Ic className="h-[18px] w-[18px]"><path d="M8 6H52M30 6V50M12 8L4 34M14 8L22 34M46 8L38 34M48 8L56 34M3 35H23M37 35H57" /><path d="M8 53H52" strokeWidth="7" /></Ic>
      </div>
    </main>
  );
}

/* ---------- bottom tabs ---------- */

const tabs = [
  { n: "chassis", k: "s", w: "w-[89px]" }, { n: "spacer", k: "s", w: "w-[84px]" }, { n: "armor", k: "s", w: "w-[81px]" },
  { n: "Chassis Drawing 1", k: "d", w: "w-[157px]" }, { n: "Drawing 1", k: "d", w: "w-[104px]" },
  { n: "Assembly48mm", k: "a", w: "w-[144px]" }, { n: "Assembly_Test (1)", k: "a", w: "w-[158px]" }, { n: "Assembly_Test", k: "a", w: "w-[139px]" },
  { n: "Assembly48mm parts", k: "s", w: "w-[181px]" }, { n: "Adafruit BNO085 STEM...", k: "a", w: "w-[200px]" }, { n: "CD74HC4050PW v2", k: "a", w: "w-[166px]" },
  { n: "Adafruit BNO085 STEMMA", k: "s", w: "w-[200px]" },
];

function Tabs() {
  return (
    <footer className="flex h-[31px] shrink-0 border-t border-[#ccc] bg-[#cfcfcf] text-[14px]">
      <div className="flex w-[39px] shrink-0 items-center justify-center pr-[5px]">
        <svg viewBox="0 0 15 15" className="h-[15px] w-[15px]" stroke="#555" strokeWidth="2.200"><path d="M7.500 0V15M0 7.500H15" /></svg>
      </div>
      <div className="relative flex h-7 min-w-0 flex-1 gap-[2px] overflow-hidden">
        <div className="flex h-7 w-[115px] shrink-0 items-center gap-1 border-b-2 border-[#2a31b5] bg-white pl-[11px] pt-[2px] tracking-[-0.1px] text-[#333]"><AsmIcon c="h-[18px] w-[18px]" line="#333" />Assembly 1</div>
        {tabs.map((t) => (
          <div key={t.n} className={`flex h-7 ${t.w} shrink-0 items-center gap-1 whitespace-nowrap rounded-b-[5px] bg-[#e9e9e9] pl-[11px] tracking-[-0.08px] text-[#666]`}>
            {t.k === "a" ? <AsmIcon c="h-[18px] w-[18px]" line="#333" /> : t.k === "s" ? <StudioIcon /> : <DrawingIcon />}
            {t.n}
          </div>
        ))}
        <div className="absolute right-0 top-0 h-full w-5 bg-gradient-to-r from-transparent to-[#cfcfcf]" />
      </div>
      <div className="flex w-12 shrink-0 items-center justify-between pl-[5px] pr-[7px]">
        <svg viewBox="0 0 10 16" className="h-[14px] w-[10px]" fill="none" stroke="#aaa" strokeWidth="2.200"><path d="M8 1L2 8L8 15" /></svg>
        <svg viewBox="0 0 10 16" className="h-[14px] w-[10px]" fill="none" stroke="#555" strokeWidth="2.600"><path d="M2 1L8 8L2 15" /></svg>
      </div>
    </footer>
  );
}

export default function App() {
  return (
    <div className="flex h-[1080px] w-[1920px] flex-col overflow-hidden bg-white font-[Roboto,sans-serif] text-[#333]">
      <Header />
      <div className="flex min-h-0 flex-1">
        <Rail />
        <div className="flex min-w-0 flex-1 flex-col">
          <Toolbar />
          <div className="flex min-h-0 flex-1">
            <Tree />
            <Viewport />
          </div>
          <Tabs />
        </div>
      </div>
    </div>
  );
}
